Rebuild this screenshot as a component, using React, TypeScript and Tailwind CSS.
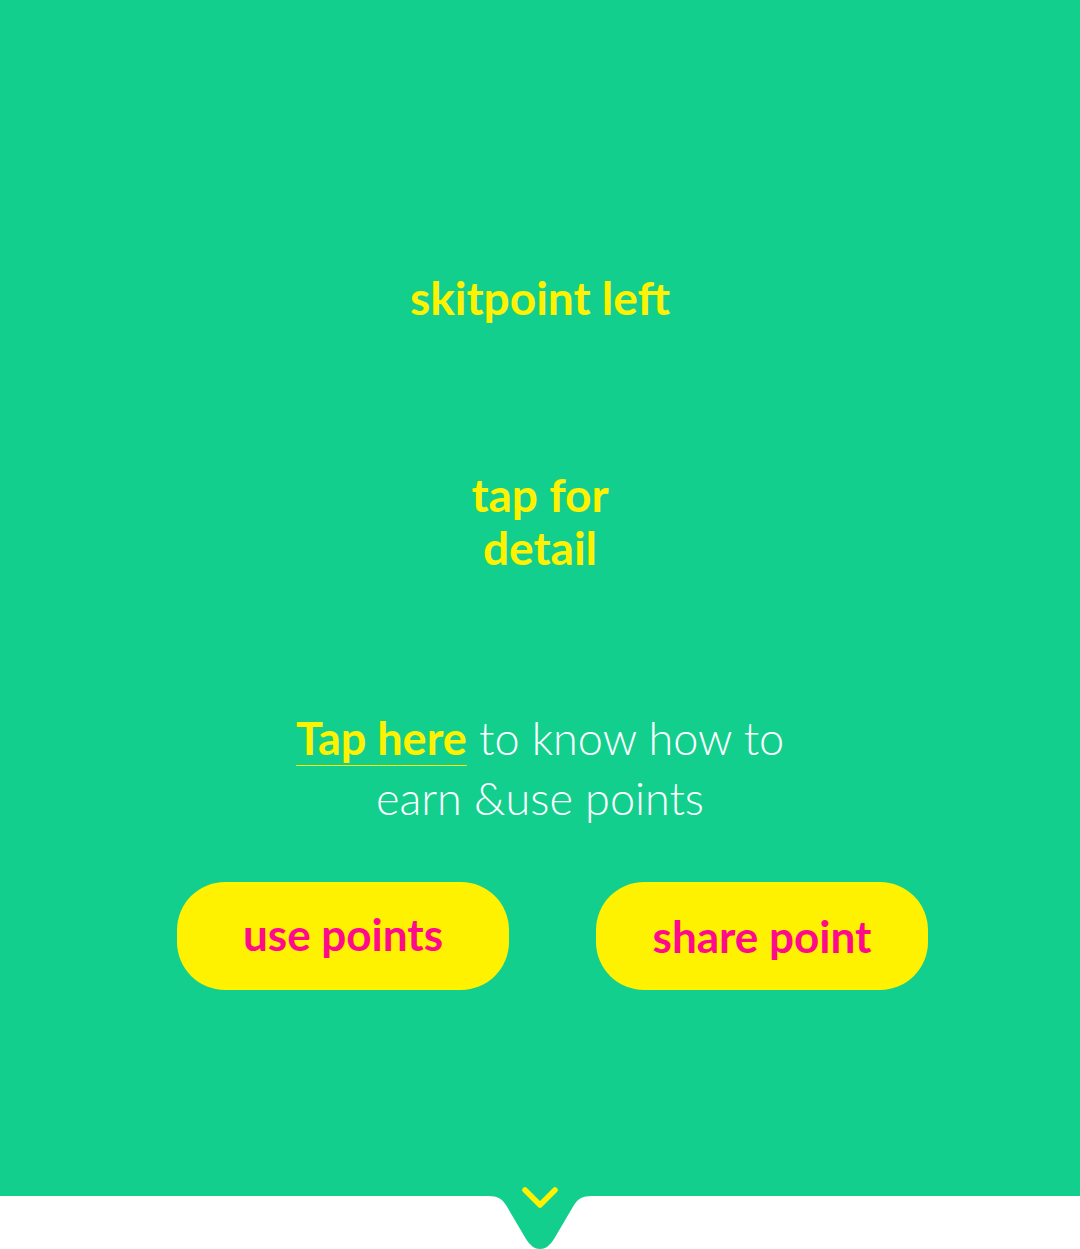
import React from "react";

export default function App() {
  return (
    <div className="relative w-[1080px] h-[1249px] bg-white overflow-hidden" style={{ fontFamily: "Lato, 'Open Sans', sans-serif" }}>
      <div className="h-[1196px] bg-[#13cf8e] flex flex-col items-center">
        <div className="mt-[274px] h-[48px] leading-[48px] text-[46px] font-bold text-[#fff200]">skitpoint left</div>
        <div className="mt-[146px] text-center leading-[53px] text-[46px] font-bold text-[#fff200]">
          <div>tap for</div>
          <div>detail</div>
        </div>
        <div className="mt-[134px] text-center leading-[60px] text-[45px] font-light text-white">
          <div>
            <span className="font-bold text-[#fff200] underline decoration-[1px] underline-offset-[10px]">Tap here</span> to know how to
          </div>
          <div>earn &amp;use points</div>
        </div>
        <div className="mt-[54px] ml-[25px] flex gap-[87px]">
          <button className="w-[332px] h-[108px] rounded-[48px] bg-[#fff200] text-[#ff0a8c] text-[44px] font-bold pb-[4px]">use points</button>
          <button className="w-[332px] h-[108px] rounded-[48px] bg-[#fff200] text-[#ff0a8c] text-[44px] font-bold">share point</button>
        </div>
      </div>
      <svg className="absolute left-[488px] top-[1196px]" width="104" height="53" viewBox="0 0 104 53">
        <path d="M0 0 C10 0 14 3 18 9 L38 43 Q44 53 52 53 Q60 53 66 43 L86 9 C90 3 94 0 104 0 Z" fill="#13cf8e" />
      </svg>
      <svg className="absolute left-[520px] top-[1184px]" width="40" height="30" viewBox="0 0 40 30">
        <path d="M5 6 L20 21 L35 6" fill="none" stroke="#fff200" strokeWidth="5.5" strokeLinecap="round" strokeLinejoin="round" />
      </svg>
    </div>
  );
}
